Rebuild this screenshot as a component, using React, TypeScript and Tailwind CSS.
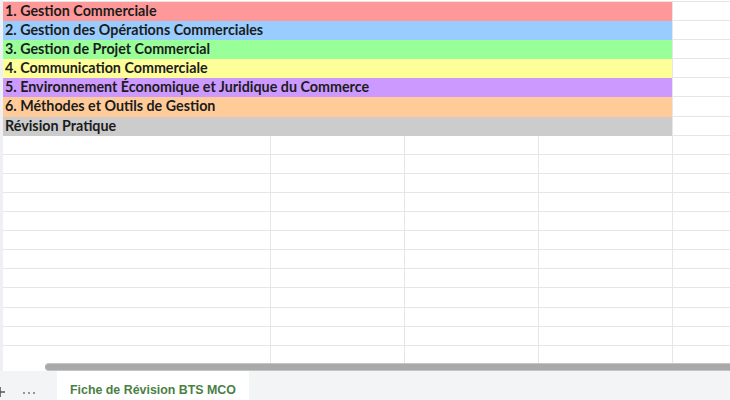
import React from 'react';

type Band = { label: string; bg: string };

const bands: Band[] = [
  { label: '1. Gestion Commerciale', bg: 'bg-[#ff9999]' },
  { label: '2. Gestion des Opérations Commerciales', bg: 'bg-[#99ccff]' },
  { label: '3. Gestion de Projet Commercial', bg: 'bg-[#99ff99]' },
  { label: '4. Communication Commerciale', bg: 'bg-[#ffff99]' },
  { label: '5. Environnement Économique et Juridique du Commerce', bg: 'bg-[#cc99ff]' },
  { label: '6. Méthodes et Outils de Gestion', bg: 'bg-[#ffcc99]' },
  { label: 'Révision Pratique', bg: 'bg-[#cccccc]' },
];

const EMPTY_ROWS = 12;

function BandRow({ band }: { band: Band }) {
  return (
    <div className="flex h-[19.1px] shrink-0">
      <div className="w-[3px] shrink-0 bg-[#eef0f4]" />
      <div
        className={`w-[669px] shrink-0 ${band.bg} pl-[2px] text-[14.3px] leading-[18px] font-bold text-[#1c1c1c] whitespace-nowrap overflow-hidden`}
        style={{ fontFamily: 'Lato, "Open Sans", sans-serif' }}
      >
        {band.label}
      </div>
      <div className="flex-1 border-b border-l border-[#e6e6e6] bg-white" />
    </div>
  );
}

function EmptyRow() {
  return (
    <div className="flex h-[19.1px] shrink-0">
      <div className="w-[3px] shrink-0 bg-[#eef0f4]" />
      <div className="w-[267px] shrink-0 border-b border-[#e6e6e6]" />
      <div className="w-[134px] shrink-0 border-b border-l border-[#e6e6e6]" />
      <div className="w-[134px] shrink-0 border-b border-l border-[#e6e6e6]" />
      <div className="w-[134px] shrink-0 border-b border-l border-[#e6e6e6]" />
      <div className="flex-1 border-b border-l border-[#e6e6e6]" />
    </div>
  );
}

export default function App() {
  return (
    <div className="w-[730px] h-[400px] overflow-hidden bg-white flex flex-col">
      {/* sheet grid */}
      <div className="h-[365px] flex flex-col overflow-hidden">
        <div className="flex h-[2px] shrink-0">
          <div className="w-[3px] bg-[#eef0f4]" />
          <div className="flex-1 border-b border-[#e6e6e6]" />
        </div>
        {bands.map((b) => (
          <BandRow key={b.label} band={b} />
        ))}
        {Array.from({ length: EMPTY_ROWS }).map((_, i) => (
          <EmptyRow key={i} />
        ))}
      </div>

      {/* horizontal scrollbar */}
      <div className="h-[8px] flex shrink-0">
        <div className="w-[45px] shrink-0 bg-white border-l-[3px] border-[#eef0f4]" />
        <div className="flex-1 bg-[#a9a9a9] rounded-l-full border-y border-[#c4c4c4]" />
      </div>

      {/* sheet tabs */}
      <div className="flex-1 flex items-stretch bg-[#f3f4f6]">
        <div className="w-[22px] shrink-0 flex items-center pt-[12px]">
          <svg width="12" height="12" viewBox="0 0 12 12" className="-ml-[6px]">
            <path d="M6 1v10M1 6h10" stroke="#555" strokeWidth="1.6" />
          </svg>
        </div>
        <div className="w-[35px] shrink-0 flex items-center gap-[3px] pt-[14px] pl-[1px]">
          <span className="w-[2px] h-[2px] rounded-full bg-[#777]" />
          <span className="w-[2px] h-[2px] rounded-full bg-[#777]" />
          <span className="w-[2px] h-[2px] rounded-full bg-[#777]" />
        </div>
        <div
          className="w-[192px] bg-white flex items-center pl-[13px] pt-[10px] text-[12.4px] font-bold text-[#4a7f45] whitespace-nowrap"
          style={{ fontFamily: '"Liberation Sans", Arial, sans-serif' }}
        >
          Fiche de Révision BTS MCO
        </div>
      </div>
    </div>
  );
}
